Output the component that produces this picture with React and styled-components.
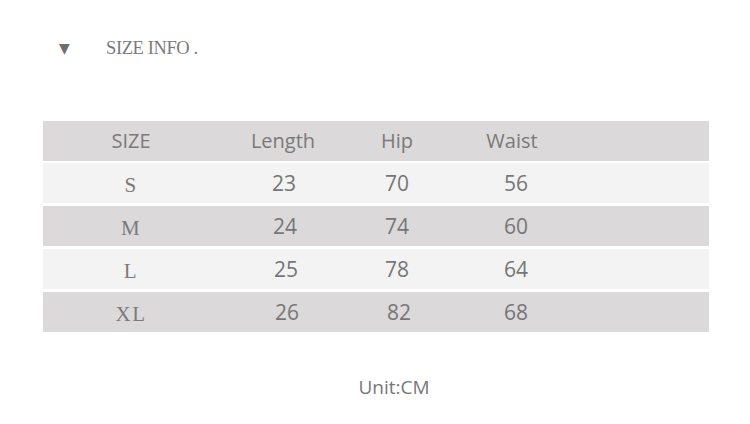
import React from "react";
import styled, { createGlobalStyle } from "styled-components";

const GlobalStyle = createGlobalStyle`
  body {
    margin: 0;
    background: #ffffff;
  }
`;

const rows = [
  { size: "S", length: "23", hip: "70", waist: "56" },
  { size: "M", length: "24", hip: "74", waist: "60" },
  { size: "L", length: "25", hip: "78", waist: "64" },
  { size: "XL", length: "26", hip: "82", waist: "68" }
];

export default function App() {
  return (
    <Page>
      <GlobalStyle />
      <TitleBar>
        <Arrow>▼</Arrow>
        <Title>SIZE INFO .</Title>
      </TitleBar>

      <Table>
        <Row $tone="dark" $gap={0}>
          <HeadCell>SIZE</HeadCell>
          <HeadCell>Length</HeadCell>
          <HeadCell>Hip</HeadCell>
          <HeadCell>Waist</HeadCell>
        </Row>
        {rows.map((r, i) => (
          <Row key={r.size} $tone={i % 2 ? "dark" : "light"} $gap={i === 0 ? 2 : 3}>
            <SizeCell>{r.size}</SizeCell>
            <Cell $nudge={2 + i * 2}>{r.length}</Cell>
            <Cell $nudge={i === 3 ? 4 : 0}>{r.hip}</Cell>
            <Cell $nudge={8}>{r.waist}</Cell>
          </Row>
        ))}
      </Table>

      <Unit>Unit:CM</Unit>
    </Page>
  );
}

const Page = styled.div`
  width: 750px;
  height: 424px;
  background: #ffffff;
  color: #777777;
  overflow: hidden;
`;

const TitleBar = styled.div`
  display: flex;
  align-items: center;
  height: 20px;
  padding: 38px 0 0 59px;
`;

const Arrow = styled.span`
  font-family: "DejaVu Sans", sans-serif;
  font-size: 14px;
  color: #6e6e6e;
  width: 47px;
`;

const Title = styled.span`
  font-family: "Liberation Serif", serif;
  font-size: 18.5px;
  color: #7a7a7a;
  letter-spacing: -0.4px;
`;

const Table = styled.div`
  margin: 63px 0 0 43px;
  width: 666px;
  display: flex;
  flex-direction: column;
`;

const Row = styled.div`
  display: grid;
  grid-template-columns: 176px 128px 100px 130px 1fr;
  align-items: center;
  height: 40px;
  margin-top: ${p => p.$gap}px;
  background: ${p => (p.$tone === "dark" ? "#dcd9da" : "#f3f3f3")};
`;

const Cell = styled.div`
  text-align: center;
  font-family: "Open Sans", sans-serif;
  font-size: 21px;
  color: #767676;
  line-height: 1;
  padding-left: ${p => p.$nudge || 0}px;
`;

const HeadCell = styled(Cell)`
  font-size: 20px;
  color: #7a7a7a;
`;

const SizeCell = styled(Cell)`
  font-family: "Liberation Serif", serif;
  font-size: 21px;
  letter-spacing: 1.5px;
  color: #7a7a7a;
  padding-top: 4px;
`;

const Unit = styled.div`
  margin-top: 42px;
  padding-left: 38px;
  text-align: center;
  font-family: "Open Sans", sans-serif;
  font-size: 19px;
  color: #777777;
`;
